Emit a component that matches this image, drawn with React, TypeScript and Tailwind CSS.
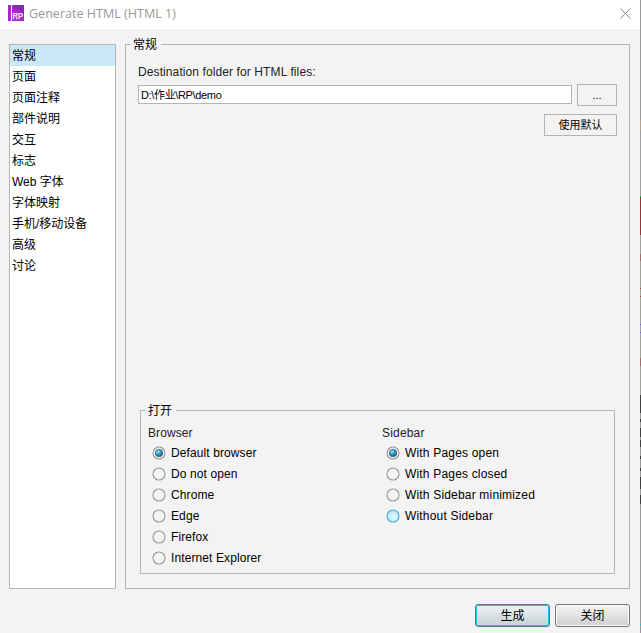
import React, { useState } from "react";
import { clsx } from "clsx";

const sections = [
  "常规",
  "页面",
  "页面注释",
  "部件说明",
  "交互",
  "标志",
  "Web 字体",
  "字体映射",
  "手机/移动设备",
  "高级",
  "讨论",
];

const browsers = [
  "Default browser",
  "Do not open",
  "Chrome",
  "Edge",
  "Firefox",
  "Internet Explorer",
];

const sidebars = [
  "With Pages open",
  "With Pages closed",
  "With Sidebar minimized",
  "Without Sidebar",
];

// slices of the window behind the dialog, visible along its right edge
const edge = [
  { h: 120, c: "#999999" },
  { h: 10, c: "#b3a28c" },
  { h: 66, c: "#a0a0a0" },
  { h: 1, c: "#22b422" },
  { h: 38, c: "#993333" },
  { h: 19, c: "#a3a39d" },
  { h: 7, c: "#a56b6b" },
  { h: 27, c: "#a3a397" },
  { h: 1, c: "#a54a4a" },
  { h: 7, c: "#a3a397" },
  { h: 1, c: "#a54a4a" },
  { h: 27, c: "#a3a397" },
  { h: 1, c: "#6a6abb" },
  { h: 7, c: "#a3a397" },
  { h: 1, c: "#6a6abb" },
  { h: 25, c: "#a3a397" },
  { h: 8, c: "#a56b6b" },
  { h: 29, c: "#a3a39d" },
  { h: 18, c: "#404040" },
  { h: 6, c: "#999999" },
  { h: 3, c: "#404040" },
  { h: 6, c: "#999999" },
  { h: 9, c: "#404040" },
  { h: 3, c: "#999999" },
  { h: 7, c: "#404040" },
  { h: 9, c: "#999999" },
  { h: 3, c: "#404040" },
  { h: 9, c: "#999999" },
  { h: 3, c: "#404040" },
  { h: 6, c: "#999999" },
  { h: 12, c: "#404040" },
  { h: 6, c: "#999999" },
  { h: 9, c: "#404040" },
  { h: 120, c: "#999999" },
  { h: 1, c: "#22b4c8" },
  { h: 8, c: "#999999" },
];

function AppIcon() {
  return (
    <svg width="16" height="16" viewBox="0 0 16 16" className="shrink-0">
      <rect width="3" height="16" fill="#a32cc4" />
      <rect x="4" width="12" height="16" fill="#a32cc4" />
      <path d="M4 0h12v10z" fill="#8429b2" />
      <text
        x="4.6"
        y="14"
        fontSize="8.5"
        textLength="10.4"
        lengthAdjust="spacingAndGlyphs"
        fill="#fff"
        stroke="#fff"
        strokeWidth="0.25"
        fontFamily="Liberation Sans, sans-serif"
      >
        RP
      </text>
    </svg>
  );
}

function RadioMark({ checked, hot }: { checked: boolean; hot: boolean }) {
  return (
    <svg width="14" height="14" viewBox="0 0 14 14" className="shrink-0">
      <defs>
        <radialGradient id="dot" cx="0.38" cy="0.32" r="0.7">
          <stop offset="0" stopColor="#a5e4f5" />
          <stop offset="0.45" stopColor="#3a9fc6" />
          <stop offset="1" stopColor="#125a80" />
        </radialGradient>
        <radialGradient id="hot" cx="0.6" cy="0.65" r="0.7">
          <stop offset="0" stopColor="#e4f8ff" />
          <stop offset="1" stopColor="#b4e2f8" />
        </radialGradient>
      </defs>
      <circle
        cx="7"
        cy="7"
        r="6"
        fill={hot ? "url(#hot)" : "#f4f4f4"}
        stroke={hot ? "#3cb0dc" : "#989898"}
        strokeWidth="1.1"
      />
      {checked && (
        <circle cx="7" cy="7" r="3.8" fill="url(#dot)" stroke="#3a6a82" strokeWidth="0.7" />
      )}
    </svg>
  );
}

interface RadioListProps {
  title: string;
  options: string[];
  value: string;
  onChange: (value: string) => void;
  hot?: string;
  className?: string;
}

function RadioList({ title, options, value, onChange, hot, className }: RadioListProps) {
  return (
    <div className={clsx("w-[234px]", className)}>
      <p className="h-[18px] leading-[19px] text-[#222]">{title}</p>
      <div role="radiogroup" aria-label={title} className="pl-1">
        {options.map((option) => (
          <button
            key={option}
            type="button"
            role="radio"
            aria-checked={option === value}
            onClick={() => onChange(option)}
            className="flex h-[21px] w-full items-center gap-[5px] text-left whitespace-nowrap"
          >
            <RadioMark checked={option === value} hot={option === hot} />
            <span>{option}</span>
          </button>
        ))}
      </div>
    </div>
  );
}

export default function App() {
  const [section, setSection] = useState("常规");
  const [folder, setFolder] = useState("D:\\作业\\RP\\demo");
  const [browser, setBrowser] = useState("Default browser");
  const [sidebar, setSidebar] = useState("With Pages open");

  return (
    <div className="flex h-[633px] w-[641px] overflow-hidden font-['Liberation_Sans','Noto_Sans_CJK_SC',sans-serif] text-[12px] text-black">
      <div className="flex w-[640px] flex-col bg-[#f3f3f3]">
        <header className="flex h-[29px] items-center bg-white pr-[9px] pb-[3px] pl-2">
          <AppIcon />
          <h1 className="ml-[5px] flex-1 pt-px font-['Open_Sans',sans-serif] text-[12.5px] leading-4 tracking-[0.03px] text-[#999]">
            Generate HTML (HTML 1)
          </h1>
          <button type="button" aria-label="Close">
            <svg width="11" height="11" viewBox="0 0 11 11" stroke="#888" strokeWidth="1">
              <path d="M.5.5l10 10M10.5.5l-10 10" />
            </svg>
          </button>
        </header>

        <main className="flex gap-[9px] pt-[15px] pl-[9px]">
          <nav className="h-[545px] w-[107px] border border-[#b4b4b4] bg-white">
            {sections.map((name) => (
              <button
                key={name}
                type="button"
                onClick={() => setSection(name)}
                className={clsx(
                  "block h-[21px] w-full pl-0.5 text-left leading-[23px]",
                  name === section && "bg-[#cae9f7]",
                )}
              >
                {name}
              </button>
            ))}
          </nav>

          <section className="flex h-[545px] w-[505px] flex-col border border-[#b4b4b4] pl-3">
            <h2 className="-mt-[9px] -ml-[7px] h-[18px] self-start bg-[#f3f3f3] pr-1 pl-0.5 leading-[18px]">
              {section}
            </h2>
            <label htmlFor="folder" className="mt-[9px] h-[18px] leading-[18px] tracking-[0.1px] text-[#222]">
              Destination folder for HTML files:
            </label>
            <div className="mt-[3px] flex items-start gap-[5px]">
              <input
                id="folder"
                value={folder}
                onChange={(e) => setFolder(e.target.value)}
                className="mt-px h-[19px] w-[434px] border border-[#b4b4b4] bg-white px-0.5 pb-px text-[11px] tracking-[-0.35px] outline-none"
              />
              <button type="button" className="h-[22px] w-10 border border-[#b4b4b4] text-[11px]">
                ...
              </button>
            </div>
            <button
              type="button"
              className="mt-2 mr-3 h-[22px] w-[73px] self-end border border-[#b4b4b4] text-[11px]"
            >
              使用默认
            </button>

            <div className="mt-auto mr-[14px] mb-[14px] ml-0.5 h-[164px] border border-[#b4b4b4] pl-[7px]">
              <h3 className="-mt-[9px] -ml-[3px] h-[18px] w-[31px] bg-[#f3f3f3] pl-[3px] leading-[18px]">
                打开
              </h3>
              <div className="mt-1 flex">
                <RadioList
                  title="Browser"
                  options={browsers}
                  value={browser}
                  onChange={setBrowser}
                  className="tracking-[0.1px]"
                />
                <RadioList
                  title="Sidebar"
                  options={sidebars}
                  value={sidebar}
                  onChange={setSidebar}
                  hot="Without Sidebar"
                  className="pl-px tracking-[0.18px]"
                />
              </div>
            </div>
          </section>
        </main>

        <footer className="mt-[15px] flex justify-end gap-[5px] pr-[10px]">
          <button
            type="button"
            className="h-[23px] w-[75px] rounded-[3px] border border-[#63767e] bg-linear-to-b from-[#eef2f4] to-[#c6d1d6] inset-ring-1 inset-ring-[#1cc3f0]"
          >
            生成
          </button>
          <button
            type="button"
            className="h-[23px] w-[75px] rounded-[3px] border border-[#777] bg-linear-to-b from-[#f4f4f4] to-[#cfcfcf] inset-ring-1 inset-ring-[#fafafa]"
          >
            关闭
          </button>
        </footer>
      </div>

      <div className="w-px bg-[#999]">
        {edge.map((slice, i) => (
          <div key={i} style={{ height: slice.h, background: slice.c }} />
        ))}
      </div>
    </div>
  );
}
